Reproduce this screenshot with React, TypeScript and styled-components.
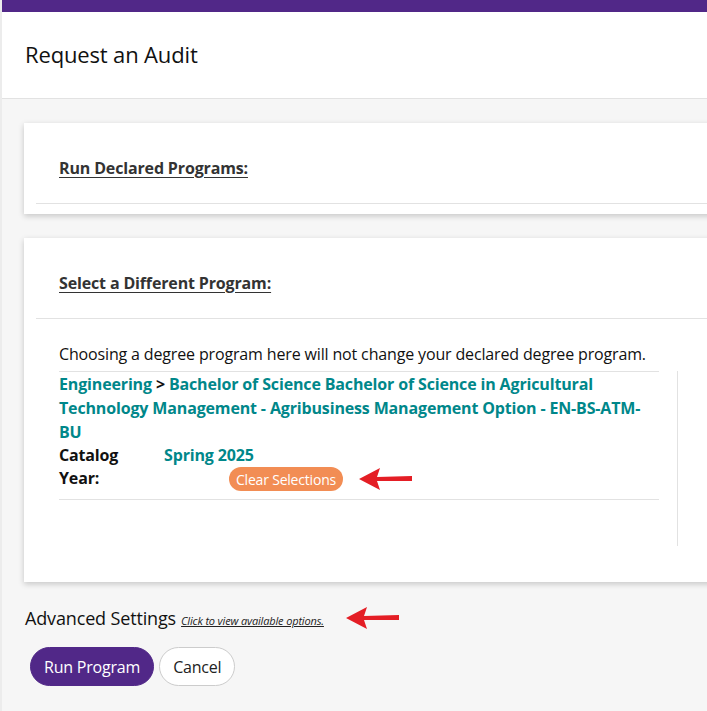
import React from 'react';
import styled, { createGlobalStyle } from 'styled-components';

const Global = createGlobalStyle`
  html, body { margin: 0; padding: 0; background: #ececec; overflow: hidden; }
  body { font-family: "Open Sans", "Liberation Sans", sans-serif; color: #111; letter-spacing: -0.15px; }
`;

const Page = styled.div`
  width: 760px;
  margin-left: 2px;
  height: 711px;
  background: #f6f6f6;
  border-top: 12px solid #512888;
`;

const Header = styled.div`
  background: #fff;
  height: 87px;
  border-bottom: 1px solid #e2e2e2;
  display: flex;
  align-items: center;
  padding-left: 23px;
  font-size: 22px;
  padding-bottom: 3px;
  box-sizing: border-box;
`;

const Body = styled.div`
  padding: 24px 0 0 22px;
  display: flex;
  flex-direction: column;
  gap: 24px;
`;

const Card = styled.div`
  background: #fff;
  box-shadow: 0 2px 6px rgba(0, 0, 0, 0.2);
  padding: 0 0 0 12px;
`;

const CardHead = styled.div`
  height: 81px;
  display: flex;
  align-items: center;
  padding: 9px 0 0 23px;
  box-sizing: border-box;
  border-bottom: 1px solid #e2e2e2;
  font-size: 16px;
  font-weight: 700;
  color: #333;
  text-decoration: underline;
  text-underline-offset: 3px;
`;

const Foot = styled.div`
  height: 10px;
`;

const CardBody = styled.div`
  padding: 24px 0 34px 23px;
  font-size: 16px;
`;

const Lead = styled.div`
  line-height: 22px;
  margin-bottom: 6px;
`;

const Inner = styled.div`
  display: flex;
`;

const Selection = styled.div`
  width: 600px;
  border-top: 1px solid #e2e2e2;
  border-bottom: 1px solid #e2e2e2;
  padding-bottom: 8px;
  margin-bottom: 48px;
`;

const Side = styled.div`
  margin-left: 18px;
  border-left: 1px solid #e2e2e2;
  height: 175px;
`;

const Program = styled.div`
  color: #00878a;
  font-weight: 700;
  line-height: 24px;
  padding-right: 10px;
`;

const Sep = styled.span`
  color: #111;
`;

const Catalog = styled.div`
  display: grid;
  grid-template-columns: 105px auto;
  line-height: 23px;
  font-weight: 700;
`;

const Value = styled.div`
  color: #00878a;
`;

const Row = styled.div`
  display: flex;
  align-items: center;
`;

const Clear = styled.button`
  margin-left: 65px;
  background: #f28d54;
  color: #fff;
  border: none;
  border-radius: 12px;
  font-family: inherit;
  font-size: 14px;
  letter-spacing: -0.2px;
  height: 24px;
  padding: 0 7px;
`;

const Arrow = styled.svg<{ $gap: number }>`
  margin-left: ${p => p.$gap}px;
`;

const Advanced = styled.div`
  display: flex;
  align-items: center;
  font-size: 18px;
  margin: 0 0 0 1px;
`;

const Link = styled.a`
  font-size: 11px;
  font-style: italic;
  text-decoration: underline;
  color: #222;
  margin-left: 5px;
  margin-top: 4px;
`;

const Buttons = styled.div`
  display: flex;
  gap: 5px;
  margin: -7px 0 0 6px;
`;

const Btn = styled.button<{ $primary?: boolean }>`
  height: 39px;
  border-radius: 20px;
  font-family: inherit;
  font-size: 16px;
  letter-spacing: -0.2px;
  padding: 0 13px;
  background: ${p => (p.$primary ? '#512888' : '#fff')};
  color: ${p => (p.$primary ? '#fff' : '#222')};
  border: 1px solid ${p => (p.$primary ? '#512888' : '#ccc')};
`;

const RedArrow = ({ gap }: { gap: number }) => (
  <Arrow $gap={gap} width="54" height="24" viewBox="0 0 54 24">
    <path d="M0 12 L21 1 L18 10 L53 9 L53 14 L18 14 L21 23 Z" fill="#e41e25" />
  </Arrow>
);

export default function App() {
  return (
    <>
      <Global />
      <Page>
        <Header>Request an Audit</Header>
        <Body>
          <Card>
            <CardHead>Run Declared Programs:</CardHead>
            <Foot />
          </Card>
          <Card>
            <CardHead>Select a Different Program:</CardHead>
            <CardBody>
              <Lead>Choosing a degree program here will not change your declared degree program.</Lead>
              <Inner>
                <Selection>
                  <Program>
                    Engineering <Sep>&gt;</Sep> Bachelor of Science Bachelor of Science in Agricultural Technology
                    Management - Agribusiness Management Option - EN-BS-ATM-BU
                  </Program>
                  <Catalog>
                    <div>Catalog</div>
                    <Value>Spring 2025</Value>
                    <div>Year:</div>
                    <Row>
                      <Clear>Clear Selections</Clear>
                      <RedArrow gap={16} />
                    </Row>
                  </Catalog>
                </Selection>
                <Side />
              </Inner>
            </CardBody>
          </Card>
          <Advanced>
            Advanced Settings <Link>Click to view available options.</Link>
            <RedArrow gap={22} />
          </Advanced>
          <Buttons>
            <Btn $primary>Run Program</Btn>
            <Btn>Cancel</Btn>
          </Buttons>
        </Body>
      </Page>
    </>
  );
}
